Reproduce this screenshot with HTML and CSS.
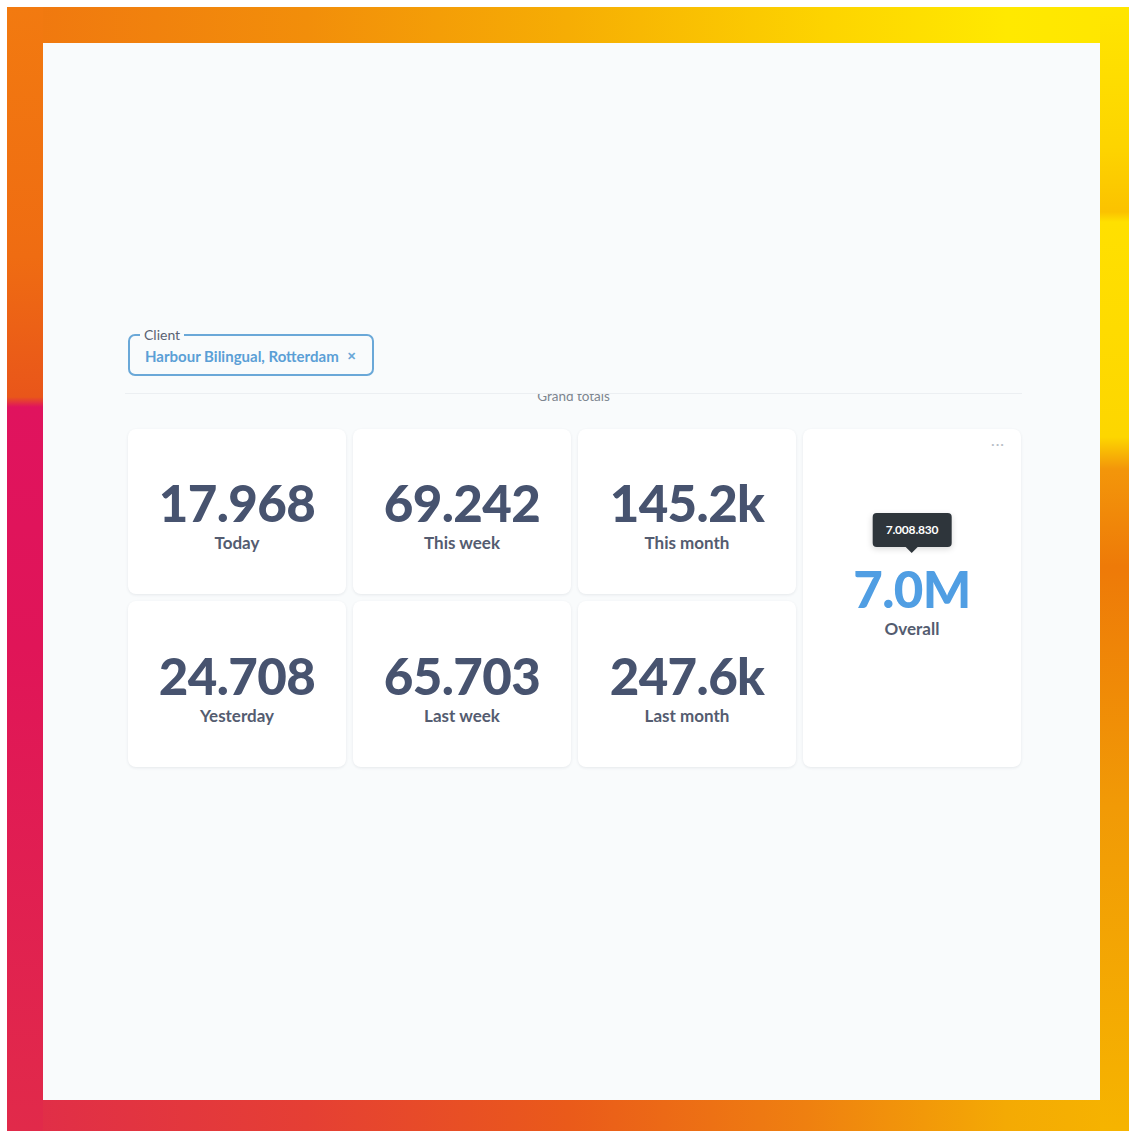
FILE: index.html
```html
<!DOCTYPE html>
<html lang="en">
<head>
<meta charset="utf-8">
<title>Grand totals</title>
<link rel="stylesheet" href="styles.css">
</head>
<body>
<div class="frame">
  <main class="panel">
    <fieldset class="filter">
      <legend class="filter-label">Client</legend>
      <div class="filter-value">
        <span>Harbour Bilingual, Rotterdam</span>
        <span class="filter-clear">&#x2715;</span>
      </div>
    </fieldset>

    <div class="section-head"><span>Grand totals</span></div>

    <section class="grid">
      <div class="card">
        <div class="value">17.968</div>
        <div class="label">Today</div>
      </div>
      <div class="card">
        <div class="value">69.242</div>
        <div class="label">This week</div>
      </div>
      <div class="card">
        <div class="value">145.2k</div>
        <div class="label">This month</div>
      </div>
      <div class="card card-tall">
        <span class="card-menu">&middot;&middot;&middot;</span>
        <div class="value-wrap">
          <div class="tooltip">7.008.830</div>
          <div class="value value-blue">7.0M</div>
        </div>
        <div class="label">Overall</div>
      </div>
      <div class="card">
        <div class="value">24.708</div>
        <div class="label">Yesterday</div>
      </div>
      <div class="card">
        <div class="value">65.703</div>
        <div class="label">Last week</div>
      </div>
      <div class="card">
        <div class="value">247.6k</div>
        <div class="label">Last month</div>
      </div>
    </section>
  </main>
</div>
</body>
</html>
```

FILE: styles.css
```css
html, body {
  margin: 0;
  padding: 0;
  background: #ffffff;
}

body {
  font-family: Lato, "Open Sans", "Liberation Sans", sans-serif;
  color: #4c5773;
}

/* colourful backdrop around the dashboard */
.frame {
  margin: 7px 0 0 7px;
  width: 1122px;
  height: 1124px;
  box-sizing: border-box;
  padding: 36px 29px 31px 36px;
  background:
    linear-gradient(to bottom, #f27a10 0, #ef6c12 250px, #e9561a 390px, #e0135e 400px, #e01558 640px, #e12a4a 100%) left top / 36px 100% no-repeat,
    linear-gradient(to bottom, #ffe600 0, #fdd400 140px, #fbc200 205px, #ffe000 215px, #fdd600 430px, #f3960a 462px, #ee7a08 560px, #f19a06 800px, #f6b400 100%) right top / 29px 100% no-repeat,
    linear-gradient(to right, #f07610 0, #f28e0a 300px, #f6ad04 560px, #fdd400 820px, #ffe900 1000px, #ffe600 100%) left top / 100% 36px no-repeat,
    linear-gradient(to right, #e02c4a 0, #e53f34 300px, #ea5a1a 560px, #ef8010 800px, #f4aa04 1000px, #f6b400 100%) left bottom / 100% 31px no-repeat,
    #f08010;
}

.panel {
  width: 1057px;
  height: 1057px;
  box-sizing: border-box;
  background: #f9fbfc;
  padding: 285px 78px 0 82px;
}

/* client filter */
.filter {
  margin: 0 0 0 3px;
  padding: 0 16px 4px 15px;
  width: 246px;
  box-sizing: border-box;
  border: 2px solid #6aa8d8;
  border-radius: 7px;
}

.filter-label {
  padding: 0 4px;
  margin-left: -5px;
  font-size: 14px;
  line-height: 14px;
  font-weight: 400;
  color: #5a6272;
}

.filter-value {
  display: flex;
  align-items: center;
  justify-content: space-between;
  height: 28px;
  font-size: 15px;
  font-weight: 700;
  color: #5b9fd6;
  white-space: nowrap;
}

.filter-clear {
  font-size: 11px;
  color: #6aa8d8;
}

/* section heading, clipped by its container */
.section-head {
  margin-top: 17px;
  border-top: 1px solid #eceff2;
  height: 10px;
  overflow: hidden;
  text-align: center;
}

.section-head span {
  display: block;
  margin-top: -6px;
  font-size: 13.5px;
  line-height: 16px;
  color: #7d858f;
}

/* scalar cards */
.grid {
  margin: 25px 1px 0 3px;
  display: grid;
  grid-template-columns: repeat(4, 1fr);
  grid-template-rows: 165px 166px;
  gap: 7px;
}

.card {
  position: relative;
  background: #ffffff;
  border-radius: 8px;
  box-shadow: 0 1px 3px rgba(60, 70, 90, 0.1);
  display: flex;
  flex-direction: column;
  align-items: center;
  justify-content: center;
  padding-top: 8px;
  box-sizing: border-box;
}

.card-tall {
  grid-column: 4;
  grid-row: 1 / span 2;
  padding-top: 6px;
}

.value {
  font-size: 51px;
  line-height: 50px;
  font-weight: 900;
  letter-spacing: -0.6px;
  color: #47536f;
}

.value-blue {
  color: #509ee3;
}

.label {
  margin-top: 4px;
  font-size: 17px;
  line-height: 21px;
  font-weight: 700;
  color: #545c70;
}

.value-wrap {
  position: relative;
}

.tooltip {
  position: absolute;
  left: 50%;
  bottom: 100%;
  margin-bottom: 17px;
  transform: translateX(-50%);
  background: #2e353b;
  color: #ffffff;
  font-size: 12px;
  font-weight: 700;
  letter-spacing: -0.2px;
  line-height: 34px;
  padding: 0 13px;
  border-radius: 4px;
  white-space: nowrap;
  box-shadow: 0 2px 6px rgba(0, 0, 0, 0.15);
}

.tooltip::after {
  content: "";
  position: absolute;
  left: 50%;
  top: 100%;
  margin-left: -6px;
  border: 6px solid transparent;
  border-top-color: #2e353b;
}

.card-menu {
  position: absolute;
  top: 6px;
  right: 16px;
  font-size: 14px;
  letter-spacing: 1px;
  color: #b8bec6;
}
```
